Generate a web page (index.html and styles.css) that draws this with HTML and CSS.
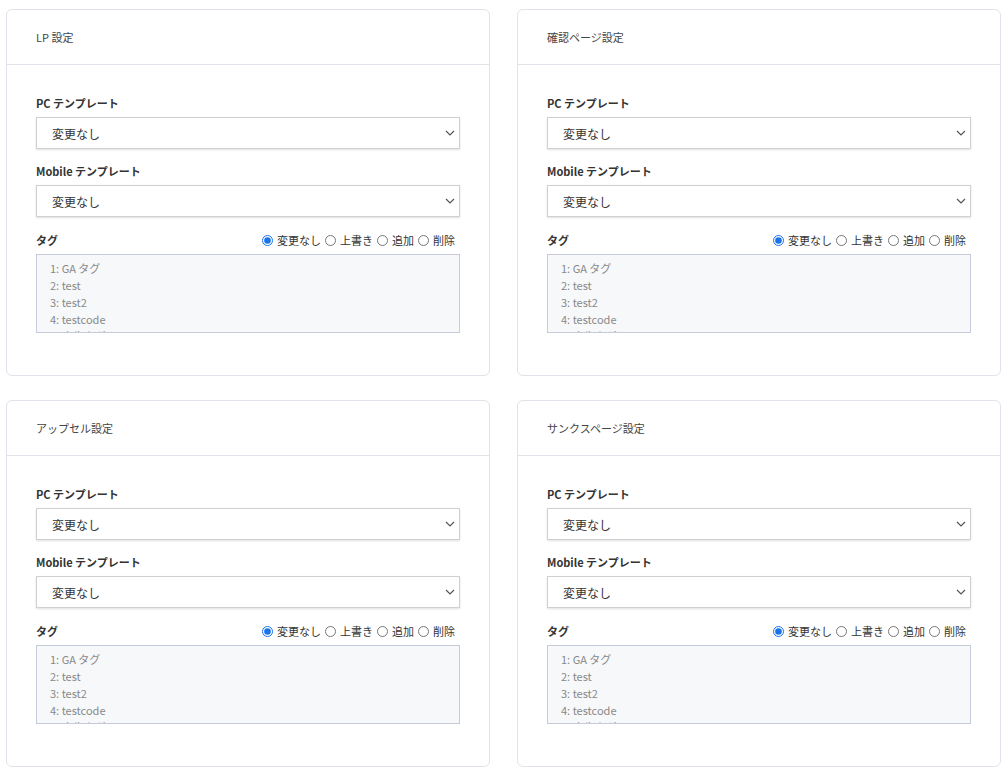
FILE: index.html
```html
<!DOCTYPE html>
<html lang="ja">
<head>
  <meta charset="UTF-8" />
  <meta name="viewport" content="width=device-width, initial-scale=1.0"/>
  <title>ページ設定</title>
  <link rel="stylesheet" href="styles.css">
</head>
<body>
  <div id="wrapper">

    <div class="card">
      <div class="card-head">LP 設定</div>
      <div class="card-body">
        <div class="label">PC テンプレート</div>
        <div class="select-box first">
          <select><option>変更なし</option></select>
          <svg class="chevron" width="10" height="6" viewBox="0 0 10 6"><path d="M1 1l4 4 4-4" fill="none" stroke="#555" stroke-width="1.2"/></svg>
        </div>
        <div class="label">Mobile テンプレート</div>
        <div class="select-box">
          <select><option>変更なし</option></select>
          <svg class="chevron" width="10" height="6" viewBox="0 0 10 6"><path d="M1 1l4 4 4-4" fill="none" stroke="#555" stroke-width="1.2"/></svg>
        </div>
        <div class="tag-row">
          <div class="label">タグ</div>
          <div class="radios">
            <label><input type="radio" name="tag1" checked> 変更なし</label>
            <label><input type="radio" name="tag1"> 上書き</label>
            <label><input type="radio" name="tag1"> 追加</label>
            <label><input type="radio" name="tag1"> 削除</label>
          </div>
        </div>
        <textarea readonly>1: GA タグ
2: test
3: test2
4: testcode
5: 広告タグ</textarea>
      </div>
    </div>

    <div class="card">
      <div class="card-head">確認ページ設定</div>
      <div class="card-body">
        <div class="label">PC テンプレート</div>
        <div class="select-box first">
          <select><option>変更なし</option></select>
          <svg class="chevron" width="10" height="6" viewBox="0 0 10 6"><path d="M1 1l4 4 4-4" fill="none" stroke="#555" stroke-width="1.2"/></svg>
        </div>
        <div class="label">Mobile テンプレート</div>
        <div class="select-box">
          <select><option>変更なし</option></select>
          <svg class="chevron" width="10" height="6" viewBox="0 0 10 6"><path d="M1 1l4 4 4-4" fill="none" stroke="#555" stroke-width="1.2"/></svg>
        </div>
        <div class="tag-row">
          <div class="label">タグ</div>
          <div class="radios">
            <label><input type="radio" name="tag2" checked> 変更なし</label>
            <label><input type="radio" name="tag2"> 上書き</label>
            <label><input type="radio" name="tag2"> 追加</label>
            <label><input type="radio" name="tag2"> 削除</label>
          </div>
        </div>
        <textarea readonly>1: GA タグ
2: test
3: test2
4: testcode
5: 広告タグ</textarea>
      </div>
    </div>

    <div class="card">
      <div class="card-head">アップセル設定</div>
      <div class="card-body">
        <div class="label">PC テンプレート</div>
        <div class="select-box first">
          <select><option>変更なし</option></select>
          <svg class="chevron" width="10" height="6" viewBox="0 0 10 6"><path d="M1 1l4 4 4-4" fill="none" stroke="#555" stroke-width="1.2"/></svg>
        </div>
        <div class="label">Mobile テンプレート</div>
        <div class="select-box">
          <select><option>変更なし</option></select>
          <svg class="chevron" width="10" height="6" viewBox="0 0 10 6"><path d="M1 1l4 4 4-4" fill="none" stroke="#555" stroke-width="1.2"/></svg>
        </div>
        <div class="tag-row">
          <div class="label">タグ</div>
          <div class="radios">
            <label><input type="radio" name="tag3" checked> 変更なし</label>
            <label><input type="radio" name="tag3"> 上書き</label>
            <label><input type="radio" name="tag3"> 追加</label>
            <label><input type="radio" name="tag3"> 削除</label>
          </div>
        </div>
        <textarea readonly>1: GA タグ
2: test
3: test2
4: testcode
5: 広告タグ</textarea>
      </div>
    </div>

    <div class="card">
      <div class="card-head">サンクスページ設定</div>
      <div class="card-body">
        <div class="label">PC テンプレート</div>
        <div class="select-box first">
          <select><option>変更なし</option></select>
          <svg class="chevron" width="10" height="6" viewBox="0 0 10 6"><path d="M1 1l4 4 4-4" fill="none" stroke="#555" stroke-width="1.2"/></svg>
        </div>
        <div class="label">Mobile テンプレート</div>
        <div class="select-box">
          <select><option>変更なし</option></select>
          <svg class="chevron" width="10" height="6" viewBox="0 0 10 6"><path d="M1 1l4 4 4-4" fill="none" stroke="#555" stroke-width="1.2"/></svg>
        </div>
        <div class="tag-row">
          <div class="label">タグ</div>
          <div class="radios">
            <label><input type="radio" name="tag4" checked> 変更なし</label>
            <label><input type="radio" name="tag4"> 上書き</label>
            <label><input type="radio" name="tag4"> 追加</label>
            <label><input type="radio" name="tag4"> 削除</label>
          </div>
        </div>
        <textarea readonly>1: GA タグ
2: test
3: test2
4: testcode
5: 広告タグ</textarea>
      </div>
    </div>

  </div>
</body>
</html>
```

FILE: styles.css
```css
* {
  box-sizing: border-box;
}

html, body {
  margin: 0;
  padding: 0;
  background: white;
  font-family: "Noto Sans CJK JP", "Noto Sans", sans-serif;
  color: #333;
}

#wrapper {
  display: grid;
  grid-template-columns: 484px 484px;
  column-gap: 27px;
  row-gap: 24px;
  padding: 9px 0 0 6px;
}

.card {
  border: 1px solid #e2e2ea;
  border-radius: 6px;
  background: white;
}

.card-head {
  height: 55px;
  border-bottom: 1px solid #e2e2ea;
  padding-left: 29px;
  display: flex;
  align-items: center;
  font-size: 11px;
  color: #444;
}

.card-body {
  padding: 31px 29px 42px;
}

.label {
  font-size: 11px;
  font-weight: 700;
  line-height: 14px;
  height: 14px;
  color: #333;
  margin-bottom: 7px;
}

.select-box {
  position: relative;
  margin-bottom: 16px;
}

.select-box.first {
  margin-bottom: 15px;
}

.select-box select {
  appearance: none;
  -webkit-appearance: none;
  display: block;
  width: 100%;
  height: 32px;
  border: 1px solid #cfcfd4;
  border-radius: 0;
  background: white;
  box-shadow: 0 1px 2px rgba(0, 0, 0, 0.12);
  padding: 0 15px;
  font-family: inherit;
  font-size: 12px;
  color: #333;
  outline: none;
}

.chevron {
  position: absolute;
  right: 5px;
  top: 13px;
  pointer-events: none;
}

.tag-row {
  display: flex;
  justify-content: space-between;
  align-items: center;
  height: 14px;
  margin-bottom: 7px;
}

.tag-row .label {
  margin-bottom: 0;
}

.radios {
  display: flex;
  gap: 4px;
  padding-right: 5px;
  font-size: 11px;
  color: #333;
}

.radios label {
  display: flex;
  align-items: center;
  gap: 4px;
}

.radios input {
  margin: 0;
  width: 11px;
  height: 11px;
  accent-color: #1a73e8;
}

textarea {
  display: block;
  width: 100%;
  height: 79px;
  resize: none;
  overflow: hidden;
  border: 1px solid #c6cadb;
  border-radius: 0;
  background: #f7f8fa;
  padding: 5px 13px;
  font-family: inherit;
  font-size: 11px;
  line-height: 17px;
  color: #888;
  outline: none;
}
```
